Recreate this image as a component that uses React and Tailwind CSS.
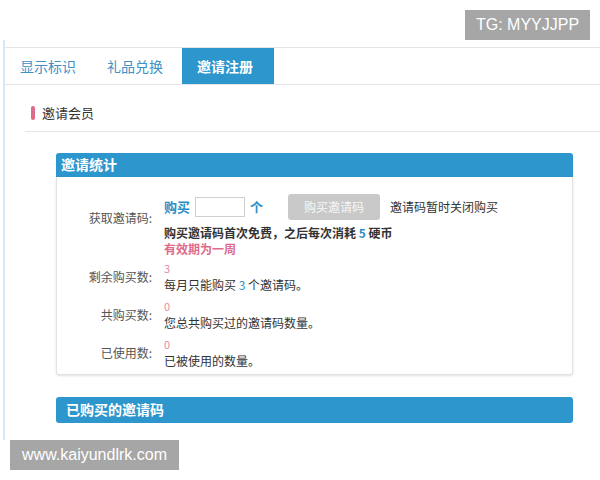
const font = { fontFamily: '"Noto Sans CJK SC", "Liberation Sans", sans-serif' }

const StatRow = ({ label, value, desc }) => {
  return (
    <div className="flex items-center">
      <div className="w-[95px] text-right text-[12px] text-[#555]">{label}</div>
      <div className="ml-[12px] flex flex-col">
        <span className="text-[11px] leading-[15px] text-[#e58aa6]">{value}</span>
        <span className="text-[12px] leading-[17px] text-[#333]">{desc}</span>
      </div>
    </div>
  )
}

const App = () => {
  return (
    <div className="relative w-[600px] h-[480px] bg-white overflow-hidden" style={font}>
      <div className="mt-[40px] ml-[3px] h-[400px] border-l-2 border-[#d4e9f5] pt-[7px]">
        <div className="flex h-[38px] border-t border-b border-[#e6e6e6]">
          <div className="w-[87px] pl-[15px] flex items-center text-[14px] text-[#3f90c4]">显示标识</div>
          <div className="w-[90px] pl-[15px] flex items-center text-[14px] text-[#3f90c4]">礼品兑换</div>
          <div className="w-[92px] pl-[15px] flex items-center text-[14px] font-bold text-white bg-[#2d96cc]">邀请注册</div>
        </div>

        <div className="ml-[20px] pt-[18px] pb-[8px] border-b border-[#e6e6e6] flex items-center">
          <span className="ml-[6px] w-[4px] h-[14px] rounded-[2px] bg-[#e06a8c]"></span>
          <span className="ml-[7px] text-[13px] text-[#333]">邀请会员</span>
        </div>

        <div className="ml-[51px] w-[517px] mt-[21px]">
          <div className="h-[24px] rounded-t-[3px] bg-[#2d96cc] pl-[5px] flex items-center text-[14px] font-bold text-white">
            邀请统计
          </div>
          <div className="h-[198px] border border-t-0 border-[#e3e3e3] rounded-b-[3px] shadow-sm pt-[17px]">
            <div className="flex">
              <div className="w-[95px] text-right text-[12px] text-[#555] pt-[15px]">获取邀请码:</div>
              <div className="ml-[12px] flex flex-col">
                <div className="flex items-center h-[26px]">
                  <span className="text-[13px] font-bold text-[#2a8fc6]">购买</span>
                  <span className="ml-[5px] w-[50px] h-[20px] border border-[#cfcfcf] bg-white"></span>
                  <span className="ml-[5px] text-[13px] font-bold text-[#2a8fc6]">个</span>
                  <span className="ml-[25px] w-[92px] h-[26px] rounded-[3px] bg-[#c9c9c9] flex items-center justify-center text-[12px] text-[#f7f7f7]">购买邀请码</span>
                  <span className="ml-[10px] text-[12px] text-[#333]">邀请码暂时关闭购买</span>
                </div>
                <div className="mt-[4px] text-[12px] leading-[17px] font-bold text-[#333]">
                  购买邀请码首次免费，之后每次消耗 <span className="text-[#2a8fc6]">5</span> 硬币
                </div>
                <div className="text-[12px] leading-[16px] font-bold text-[#e06a8c]">有效期为一周</div>
              </div>
            </div>
            <div className="mt-[4px] flex flex-col gap-[6px]">
              <StatRow label="剩余购买数:" value="3" desc={<>每月只能购买 <span className="text-[#2a8fc6]">3</span> 个邀请码。</>} />
              <StatRow label="共购买数:" value="0" desc="您总共购买过的邀请码数量。" />
              <StatRow label="已使用数:" value="0" desc="已被使用的数量。" />
            </div>
          </div>

          <div className="mt-[22px] h-[26px] rounded-[3px] bg-[#2d96cc] pl-[10px] flex items-center text-[14px] font-bold text-white">
            已购买的邀请码
          </div>
        </div>
      </div>

      <div className="absolute left-[465px] top-[10px] w-[125px] h-[30px] bg-[#a6a6a6] flex items-center justify-center text-[16px] text-white" style={{ fontFamily: '"Liberation Sans", sans-serif' }}>
        TG: MYYJJPP
      </div>
      <div className="absolute left-[10px] top-[440px] w-[169px] h-[30px] bg-[#a6a6a6] flex items-center justify-center text-[16px] text-white" style={{ fontFamily: '"Liberation Sans", sans-serif' }}>
        www.kaiyundlrk.com
      </div>
    </div>
  )
}

export default App
